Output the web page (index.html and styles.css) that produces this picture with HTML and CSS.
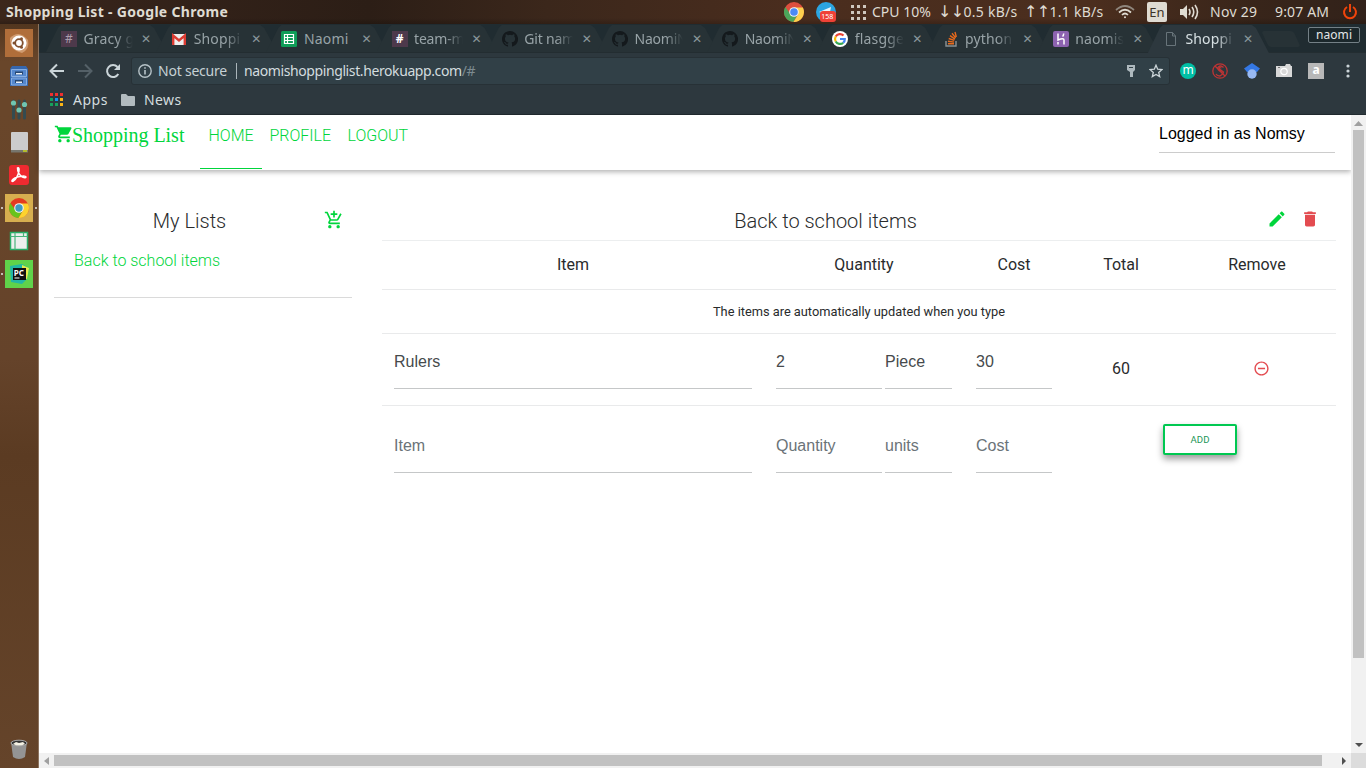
FILE: index.html
```html
<!DOCTYPE html>
<html lang="en">
<head>
<meta charset="utf-8">
<title>Shopping List</title>
<link rel="stylesheet" href="styles.css">
</head>
<body>
<svg class="defs" width="0" height="0">
  <symbol id="github" viewBox="0 0 16 16"><path fill="#14191c" d="M8 0C3.58 0 0 3.58 0 8c0 3.54 2.29 6.53 5.47 7.59.4.07.55-.17.55-.38v-1.49c-2.01.37-2.53-.49-2.69-.94-.09-.23-.48-.94-.82-1.13-.28-.15-.68-.52-.01-.53.63-.01 1.08.58 1.23.82.72 1.21 1.87.87 2.33.66.07-.52.28-.87.51-1.07-1.78-.2-3.64-.89-3.64-3.95 0-.87.31-1.59.82-2.15-.08-.2-.36-1.02.08-2.12 0 0 .67-.21 2.2.82a7.6 7.6 0 0 1 4 0c1.53-1.04 2.2-.82 2.2-.82.44 1.1.16 1.92.08 2.12.51.56.82 1.27.82 2.15 0 3.07-1.87 3.75-3.65 3.95.29.25.54.73.54 1.48v2.2c0 .21.15.46.55.38A8 8 0 0 0 8 0z"/></symbol>
  <symbol id="chrome" viewBox="0 0 20 20"><circle cx="10" cy="10" r="10" fill="#dd4f3e"/><path fill="#4ba65a" d="M1.3 5A10 10 0 0 0 9.5 20l4.3-7.7L10 10l-4.4 1z"/><path fill="#fdd04e" d="M10 5.5h8.9A10 10 0 0 1 9.5 20l4.500-7.500z"/><circle cx="10" cy="10" r="4.800" fill="#f4f4f4"/><circle cx="10" cy="10" r="3.800" fill="#4a8af4"/></symbol>
</svg>
<header class="panel">
  <strong class="window-title">Shopping List - Google Chrome</strong>
  <div class="indicators">
    <svg class="ind-chrome" width="20" height="20"><use href="#chrome"/></svg>
    <svg class="ind-telegram" width="20" height="20" viewBox="0 0 20 20"><circle cx="10" cy="10" r="10" fill="#2ca5e0"/><path d="M3 10l12-5-2 10-4-3-1 2-1-3z" fill="#e9f5fb"/><rect x="4" y="9" width="16" height="11" rx="3" fill="#ef4136"/><text x="5.2" y="17.4" class="badge-text">158</text></svg>
    <svg class="ind-grid" width="15" height="15" viewBox="0 0 15 15" fill="#cfc8bf"><path d="M0 0h3v3H0zM6 0h3v3H6zM12 0h3v3h-3zM0 6h3v3H0zM6 6h3v3H6zM12 6h3v3h-3zM0 12h3v3H0zM6 12h3v3H6zM12 12h3v3h-3z"/></svg>
    <span class="cpu">CPU 10%</span><span class="net-down"><b>↓↓</b>0.5 kB/s</span><span class="net-up"><b>↑↑</b>1.1 kB/s</span>
    <svg class="ind-wifi" width="20" height="14" viewBox="0 0 20 14" fill="none" stroke="#dfdbd2" stroke-width="1.700"><path d="M1 5Q10-3 19 5" stroke="#8f867d"/><path d="M4 7.500Q10 2 16 7.500M7 10Q10 7 13 10"/><circle cx="10" cy="12.300" r="1" fill="#dfdbd2" stroke="none"/></svg>
    <span class="lang">En</span>
    <svg class="ind-sound" width="20" height="16" viewBox="0 0 20 16" fill="none" stroke="#dfdbd2" stroke-width="1.600"><path d="M1 5h3l4-4v14l-4-4H1z" fill="#dfdbd2" stroke="none"/><path d="M10 5q2 3 0 6M13 3q3.500 5 0 10M16 1q5 7 0 14"/></svg>
    <span class="date">Nov 29</span><span class="time">9:07 AM</span>
    <svg class="ind-power" width="16" height="16" viewBox="0 0 16 16" fill="none" stroke="#f0440b" stroke-width="2"><path d="M5 3a6 6 0 1 0 6 0M8 0v8"/></svg>
  </div>
</header>
<div class="desktop">
  <nav class="dock">
    <span class="tile ubuntu"><svg width="28" height="28" viewBox="0 0 28 28"><path d="M5 9q9-9 18 2 2 9-6 13Q4 21 5 9" fill="#d09b70"/><circle cx="14" cy="14" r="7.600" fill="#fff"/><circle cx="14" cy="14" r="3.800" fill="none" stroke="#81502f" stroke-width="1.800"/><g fill="#81502f"><circle cx="9" cy="14" r="1.500"/><circle cx="16.500" cy="9.700" r="1.500"/><circle cx="16.500" cy="18.300" r="1.500"/></g></svg></span>
    <span class="tile"><svg width="28" height="28" viewBox="0 0 28 28"><path d="M7 4h14l2 3v17H5V7z" fill="#3667ae"/><path d="M6.500 7.500h15v7h-15zM6.500 16h15v7h-15z" fill="#5487cd" stroke="#86aee2"/><path d="M10 9.500h8v3h-8zM10 18h8v3h-8z" fill="#26466f"/><path d="M11 11h6v1.500h-6zM11 19.500h6V21h-6z" fill="#e8eef5"/></svg></span>
    <span class="tile"><svg width="28" height="28" viewBox="0 0 28 28"><path d="M8.500 6v17M14 6v17M19.500 6v17" stroke="#344b50" stroke-width="3" stroke-linecap="round"/><g fill="#70c5b0"><circle cx="8.500" cy="8" r="2.600"/><circle cx="14" cy="15" r="2.600"/><circle cx="19.500" cy="9.500" r="2.600"/></g></svg></span>
    <span class="tile"><svg width="28" height="28" viewBox="0 0 28 28"><rect x="6" y="4" width="17" height="20" rx="1" fill="#ccc"/><path d="M6 22h17v2.500H6z" fill="#77766e"/><path d="M18 23h4" stroke="#c8d51d" stroke-width="1.500"/></svg></span>
    <span class="tile"><svg width="28" height="28" viewBox="0 0 28 28"><rect x="4" y="4" width="20" height="20" rx="3" fill="#ef2a30"/><path d="M12.500 7q2-1 1.500 3-1.500 7-5.500 10-2 1-1.500-.5 2-3 8-4 6-1 6 .5-.5 1.500-3.500 0-5-3-5-9z" fill="none" stroke="#fff" stroke-width="1.500"/></svg></span>
    <span class="tile chrome-tile"><svg width="28" height="28" viewBox="0 0 28 28"><circle cx="14" cy="14" r="10" fill="#e33b20"/><path d="M5.300 9A10 10 0 0 0 13.500 24l4.300-7.700L14 14l-4.400 1z" fill="#67c31c"/><path d="M14 9.500h8.900A10 10 0 0 1 13.500 24l4.500-7.500z" fill="#fdd32e"/><circle cx="14" cy="14" r="4.800" fill="#f4f4f4"/><circle cx="14" cy="14" r="3.700" fill="#3f9bc0"/></svg></span>
    <span class="tile"><svg width="28" height="28" viewBox="0 0 28 28"><path d="M5.500 5.500h17v17h-17z" fill="#eceeed" stroke="#28ad67" stroke-width="1.500"/><path d="M5.500 9.500h17M10 5.500v17M18.500 5.500v4" stroke="#49b57c" stroke-width="1.200"/></svg></span>
    <span class="tile pycharm"><svg width="28" height="28" viewBox="0 0 28 28"><path d="M5 6l12-2 7 4-2 11-5 5-11-2z" fill="#22b7a4"/><path d="M17 5l7 3-2 11-5-1z" fill="#e9ed4a"/><path d="M8 8h13v12H8z" fill="#111"/><text x="8.800" y="15.600" class="pc">PC</text><path d="M9.500 18h5" stroke="#fff"/></svg></span>
    <svg class="trash" width="20" height="22" viewBox="0 0 20 22"><path d="M2 3l2 15q6 4 12 0l2-15z" fill="#949494"/><ellipse cx="10" cy="4" rx="8" ry="2.800" fill="#333" stroke="#aaa"/><path d="M4 5l3-2 3 1 4-1 2 2q-6 3-12 0" fill="#f5f2e4"/></svg>
  </nav>
  <main class="window">
    <div class="tabs">
      <div class="tab"><b class="fav slack dim">#</b><span>Gracy g</span><i>✕</i></div>
      <div class="tab"><svg class="fav" viewBox="0 0 16 16"><path d="M1.500 3h13v11h-13z" fill="#eee"/><path d="M2.200 14V4.500L8 9.500l5.800-5V14" fill="none" stroke="#dc3b32" stroke-width="2.400"/></svg><span>Shoppi</span><i>✕</i></div>
      <div class="tab"><svg class="fav" viewBox="0 0 16 16"><rect width="16" height="16" rx="1.500" fill="#0f9d58"/><path d="M3.500 3.500h9v9h-9zM3.500 6.500h9M3.500 9.500h9M6.500 3.500v9" fill="none" stroke="#fff" stroke-width="1.200"/></svg><span class="short">Naomi</span><i>✕</i></div>
      <div class="tab"><b class="fav slack">#</b><span class="tight">team-m</span><i>✕</i></div>
      <div class="tab"><svg class="fav"><use href="#github"/></svg><span class="tight">Git nam</span><i>✕</i></div>
      <div class="tab"><svg class="fav"><use href="#github"/></svg><span class="tight">NaomiN</span><i>✕</i></div>
      <div class="tab"><svg class="fav"><use href="#github"/></svg><span class="tight">NaomiN</span><i>✕</i></div>
      <div class="tab"><svg class="fav" viewBox="0 0 16 16" fill="none" stroke-width="2.200"><circle cx="8" cy="8" r="8" fill="#fff" stroke="none"/><path d="M11.500 4.500A5 5 0 0 0 3.700 5.500" stroke="#ea4335"/><path d="M3.700 5.500a5 5 0 0 0 0 5" stroke="#fbbc05"/><path d="M3.700 10.500a5 5 0 0 0 7.500 1.300" stroke="#34a853"/><path d="M11.200 11.800A5 5 0 0 0 12.800 8H8" stroke="#4285f4"/></svg><span>flasgge</span><i>✕</i></div>
      <div class="tab"><svg class="fav" viewBox="0 0 16 16" fill="none" stroke-width="1.400"><path d="M3 10v5h10v-5" stroke="#8b9295"/><path d="M5 12.700h6M5 10.300l6 .8M5.700 7.500l5.600 1.800M7 4.700l5 3.400M9 2.300l3.600 4.600M12 1l1.300 5" stroke="#e86a1c"/></svg><span>python</span><i>✕</i></div>
      <div class="tab"><svg class="fav" viewBox="0 0 16 16"><rect width="16" height="16" rx="2" fill="#8d63b0"/><path d="M5 2.500v6.500q6-2.500 6 0v4.500M10.700 2.500q0 2-1.200 3M5 11v2.500" fill="none" stroke="#fff" stroke-width="1.500"/></svg><span>naomis</span><i>✕</i></div>
      <div class="tab active"><svg class="fav" viewBox="0 0 16 16"><path d="M3.500 1.500h6l3 3.500v9.500h-9zM9.500 1.500V5h3" fill="none" stroke="#68747a"/></svg><span>Shoppi</span><i>✕</i></div>
      <div class="new-tab"></div>
      <div class="profile">naomi</div>
    </div>
    <div class="toolbar">
      <svg class="nav-icon" width="16" height="16" viewBox="0 0 16 16"><path d="M15 8H2M8 1.500L1.500 8 8 14.500" /></svg>
      <svg class="nav-icon faded" width="16" height="16" viewBox="0 0 16 16"><path d="M1 8h13M8 1.500L14.500 8 8 14.500"/></svg>
      <svg class="nav-icon" width="16" height="16" viewBox="0 0 16 16"><path d="M13.300 11A6 6 0 1 1 12.500 4"/><path d="M15 1v6H9z" class="solid"/></svg>
      <div class="omnibox">
        <svg width="14" height="14" viewBox="0 0 14 14" fill="none" stroke="#b6c2c7" stroke-width="1.400"><circle cx="7" cy="7" r="6.200"/><path d="M7 6v4.500M7 3.200v1.500" stroke-width="1.600"/></svg>
        <span class="insecure">Not secure</span><span class="divider"></span>
        <span class="url">naomishoppinglist.herokuapp.com<em>/#</em></span>
        <svg class="key" width="8" height="13" viewBox="0 0 8 13"><path d="M0 0h8v5L6 7v5H3V7L0 5z" fill="#aeb9be"/><path d="M2 2.500h4" stroke="#314047"/></svg>
        <svg class="star" width="14" height="14" viewBox="0 0 14 14"><path d="M7 1.200l1.700 4 4.300.4-3.300 2.800 1 4.200L7 10.400l-3.700 2.200 1-4.200L1 5.600l4.300-.4z" fill="none" stroke="#cbd4d8" stroke-width="1.300"/></svg>
      </div>
      <div class="extensions">
        <b class="ext-m">m</b>
        <svg width="16" height="16" viewBox="0 0 16 16" fill="none" stroke="#be3434" stroke-width="1.300"><circle cx="8" cy="8" r="7.200"/><path d="M3 3l10 10M11.500 4.500C8 1 3.500 5 7 7.500s5 3 1 5.500q-3 0-4-2M9.500 5q-3-1-2 1l4 3q0 2-2 3"/></svg>
        <svg width="16" height="16" viewBox="0 0 16 16"><path d="M8 0l8 5.500-3 3.500H3L0 5.500z" fill="#3478e5"/><circle cx="8" cy="11" r="4.700" fill="#98b9f2"/></svg>
        <svg width="16" height="16" viewBox="0 0 16 16"><path d="M0 3h9l1-2h4l1 2h1v11H0z" fill="#d8d8d8"/><circle cx="8" cy="8.500" r="3.200" fill="none" stroke="#fff" stroke-width="1.200"/><path d="M2 4.500h2" stroke="#777"/></svg>
        <b class="ext-a">a</b>
        <svg width="4" height="14" viewBox="0 0 4 14" fill="#cbd4d8"><circle cx="2" cy="2" r="1.600"/><circle cx="2" cy="7" r="1.600"/><circle cx="2" cy="12" r="1.600"/></svg>
      </div>
    </div>
    <div class="bookmarks">
      <div class="apps-grid"><b></b><b></b><b></b><b></b><b></b><b></b><b></b><b></b><b></b></div>
      <span class="apps-label">Apps</span>
      <svg width="14" height="12" viewBox="0 0 14 12"><path d="M0 1q0-1 1-1h4l2 2h6q1 0 1 1v8q0 1-1 1H1q-1 0-1-1z" fill="#b2bbbf"/></svg>
      <span class="news-label">News</span>
    </div>
    <div class="viewport">
      <div class="page">
        <nav class="site-nav">
          <a class="brand"><svg width="20" height="20" viewBox="0 0 24 24"><path d="M7 18c-1.100 0-1.990.9-1.990 2S5.900 22 7 22s2-.9 2-2-.9-2-2-2zM1 2v2h2l3.600 7.590-1.350 2.450c-.16.28-.25.61-.25.96 0 1.100.9 2 2 2h12v-2H7.420c-.14 0-.25-.11-.25-.25l.03-.12.9-1.630h7.450c.75 0 1.410-.41 1.750-1.030l3.580-6.490c.08-.14.12-.31.12-.48 0-.55-.45-1-1-1H5.210l-.94-2H1zm16 16c-1.100 0-1.990.9-1.990 2s.89 2 1.990 2 2-.9 2-2-.9-2-2-2z"/></svg><span>Shopping List</span></a>
          <a class="link current">HOME</a><a class="link">PROFILE</a><a class="link last">LOGOUT</a>
          <div class="account">Logged in as Nomsy</div>
        </nav>
        <div class="columns">
          <aside class="lists">
            <div class="lists-head"><h2>My Lists</h2><svg class="add-cart" width="20" height="20" viewBox="0 0 24 24"><path d="M11 9h2V6h3V4h-3V1h-2v3H8v2h3v3zm-4 9c-1.100 0-1.990.9-1.990 2S5.900 22 7 22s2-.9 2-2-.9-2-2-2zm10 0c-1.100 0-1.990.9-1.990 2s.89 2 1.990 2 2-.9 2-2-.9-2-2-2zm-9.830-3.250l.03-.12.9-1.630h7.450c.75 0 1.410-.41 1.750-1.030l3.860-7.010L19.420 4h-.01l-1.100 2-2.760 5H8.530l-.13-.27L6.160 6l-.95-2-.94-2H1v2h2l3.600 7.590-1.350 2.450c-.16.28-.25.61-.25.96 0 1.100.9 2 2 2h12v-2H7.420c-.13 0-.25-.11-.25-.25z"/></svg></div>
            <a class="list-link">Back to school items</a>
          </aside>
          <section class="items">
            <div class="items-head"><h2>Back to school items</h2>
              <div class="actions"><svg width="20" height="20" viewBox="0 0 24 24" fill="#00d53c"><path d="M3 17.250V21h3.750L17.810 9.940l-3.750-3.750L3 17.250zM20.710 7.040c.39-.39.39-1.020 0-1.410l-2.340-2.340c-.39-.39-1.020-.39-1.410 0l-1.830 1.830 3.750 3.750 1.830-1.830z"/></svg><svg width="20" height="20" viewBox="0 0 24 24" fill="#e34b50"><path d="M6 19c0 1.100.9 2 2 2h8c1.100 0 2-.9 2-2V7H6v12zM19 4h-3.500l-1-1h-5l-1 1H5v2h14V4z"/></svg></div>
            </div>
            <div class="row head"><span>Item</span><span>Quantity</span><span>Cost</span><span>Total</span><span>Remove</span></div>
            <div class="note">The items are automatically updated when you type</div>
            <div class="row entry"><div class="cell"><div class="field">Rulers</div></div><div class="cell pair"><div class="field">2</div><div class="field unit">Piece</div></div><div class="cell"><div class="field">30</div></div><span>60</span><span><svg class="remove" width="17" height="17" viewBox="0 0 24 24" fill="#e34b50"><path d="M7 11v2h10v-2H7zm5-9C6.480 2 2 6.480 2 12s4.480 10 10 10 10-4.480 10-10S17.520 2 12 2zm0 18c-4.410 0-8-3.590-8-8s3.590-8 8-8 8 3.590 8 8-3.590 8-8 8z"/></svg></span></div>
            <div class="row new"><div class="cell"><div class="field">Item</div></div><div class="cell pair"><div class="field">Quantity</div><div class="field unit">units</div></div><div class="cell"><div class="field">Cost</div></div><div class="add-cell"><button class="add">ADD</button></div></div>
          </section>
        </div>
      </div>
      <div class="vscroll"><svg width="9" height="5" viewBox="0 0 9 5" fill="#a0a0a0"><path d="M0 5l4.500-5L9 5z"/></svg><div class="thumb"></div><svg class="down" width="8" height="4" viewBox="0 0 8 4" fill="#505050"><path d="M0 0h8L4 4z"/></svg></div>
    </div>
    <div class="hscroll"><svg width="5" height="8" viewBox="0 0 5 8" fill="#a0a0a0"><path d="M5 0L0 4l5 4z"/></svg><div class="thumb"></div><svg class="right" width="4" height="8" viewBox="0 0 4 8" fill="#505050"><path d="M0 0v8l4-4z"/></svg><div class="corner"></div></div>
  </main>
</div>
</body>
</html>
```
FILE: styles.css
```css
* { box-sizing: border-box; }
body { margin: 0; width: 1366px; height: 768px; overflow: hidden; display: flex; flex-direction: column; font-family: "Noto Sans", sans-serif; font-size: 14px; white-space: nowrap; background: #fff; }
.defs { position: absolute; }
svg { display: block; flex: none; }

/* system panel */
.panel { height: 24px; flex: none; display: flex; align-items: center; color: #dfdbd2; background: linear-gradient(to bottom, transparent 75%, #00000033), linear-gradient(to right, #3c271b, #35231a 8%, #2c1e16 27%, #3b271b 40%, #4a2d1e 58%, #4b2e1e 80%, #38251a 92%, #32221a); }
.window-title { margin: -2px 0 0 6px; width: 778px; letter-spacing: 0.3px; }
.indicators { display: flex; align-items: center; height: 24px; }
.indicators span { margin-top: -1px; }
.ind-telegram { margin-left: 12px; }
.badge-text { font: 7px "Noto Sans", sans-serif; fill: #fff; }
.ind-grid { margin: 0 6px 0 15px; }
.cpu { width: 66px; letter-spacing: 0; }
.net-down, .net-up { display: flex; letter-spacing: 0.25px; }
.net-down b, .net-up b { width: 25.500px; font: 16px/19px "DejaVu Sans", sans-serif; letter-spacing: -0.7px; }
.net-down { width: 86px; }
.net-up { width: 91px; }
.indicators .lang { margin: 0 12px 0 12px; width: 20px; height: 20px; line-height: 20px; text-align: center; border-radius: 2px; background: #dfdbd2; color: #3c3328; font-size: 13px; }
.date { margin-left: 11px; width: 65px; letter-spacing: 0.3px; }
.time { width: 67px; letter-spacing: 0.15px; }

/* launcher */
.desktop { flex: 1; display: flex; min-height: 0; }
.dock { width: 39px; flex: none; display: flex; flex-direction: column; align-items: center; gap: 5px; padding: 5px 1px 0 0; border-right: 1px solid #8c735f; background: linear-gradient(#52361f, #69462a 5%, #69462a 12%, #65432a 45%, #5b3b22 58%, #65442a); }
.tile { position: relative; width: 28px; height: 28px; flex: none; }
.ubuntu { background: #b06e3a; }
.chrome-tile { background: #d7ae4f; }
.pycharm { background: #60d34a; }
.chrome-tile::before, .chrome-tile::after, .pycharm::before { content: ""; position: absolute; top: 13px; left: -4px; width: 2px; height: 2px; background: #c5bcb5; }
.chrome-tile::after { left: 30px; }
.pc { font: bold 8px "Noto Sans", sans-serif; fill: #fff; }
.trash { margin-top: auto; margin-bottom: 7px; }

/* browser chrome */
.window { flex: 1; min-width: 0; display: flex; flex-direction: column; background: #2d383e; }
.tabs { height: 29px; flex: none; display: flex; padding-left: 7px; background: #202c31; border-bottom: 1px solid #232d31; }
.tab { position: relative; z-index: 0; width: 110.2px; flex: none; display: flex; align-items: center; padding: 2px 0 0 15px; color: #98a3a7; }
.tab::before { content: ""; position: absolute; z-index: -1; left: 0; top: 1px; width: 121px; height: 27px; background: #273236; clip-path: polygon(0 100%, 12px 3px, 15px 0, 104px 0, 108px 3px, 121px 100%); }
.tab.active { color: #d7e0e3; z-index: 2; }
.tab.active::before { background: #2d383e; height: 28px; }
.fav { width: 16px; height: 16px; flex: none; margin-right: 6.500px; }
.slack { background: #4d394b; color: #fff; text-align: center; font-size: 12px; line-height: 16px; }
.slack.dim { color: #ac9dab; font-weight: 400; }
.tab span { width: 49px; margin-top: -1px; letter-spacing: 0.15px; overflow: hidden; -webkit-mask-image: linear-gradient(to right, #000 65%, transparent); mask-image: linear-gradient(to right, #000 65%, transparent); }
.tab .tight { letter-spacing: -0.2px; }
.tab .short { letter-spacing: 0.2px; -webkit-mask-image: none; mask-image: none; }
.tab i { font: 12px "DejaVu Sans", sans-serif; color: #8a979c; width: 10px; margin-left: 8.500px; }
.new-tab { margin: 7px 0 0 7px; width: 32px; height: 16px; background: #273236; border-radius: 3px; transform: skewX(25deg); }
.profile { margin: 3px 6px 0 auto; width: 52px; height: 16px; border: 1px solid #748086; border-radius: 2px; background: #1b272b; color: #e3e6e7; font-size: 12px; letter-spacing: 0.1px; line-height: 14px; text-align: center; }
.toolbar { height: 36px; flex: none; display: flex; align-items: center; padding-left: 10px; }
.nav-icon { margin-right: 12px; fill: none; stroke: #cbd5d9; stroke-width: 2; }
.nav-icon .solid { fill: #cbd5d9; stroke: none; }
.faded { stroke: #546067; }
.omnibox { width: 1039px; height: 28px; margin-left: -2px; flex: none; display: flex; align-items: center; padding-left: 6px; border: 1px solid #273136; border-radius: 3px; background: #314047; color: #c6d0d4; }
.insecure, .url { margin-top: -2px; }
.insecure { margin-left: 6px; width: 70px; letter-spacing: -0.22px; }
.divider { width: 1px; height: 16px; margin: 0 7px 0 8px; background: #aab5ba; }
.url { color: #d3dcdf; letter-spacing: -0.4px; }
.url em { font-style: normal; color: #7d8b91; }
.key { margin-left: auto; }
.star { margin: 0 6px 0 14px; }
.extensions { display: flex; align-items: center; gap: 16px; margin-left: 10px; }
.ext-m, .ext-a { width: 16px; height: 16px; line-height: 14px; text-align: center; color: #fff; font-size: 12px; }
.ext-m { border-radius: 50%; background: #00bfa5; font-weight: 400; }
.ext-a { background: #b8b8b8; }
.extensions svg:last-child { margin-left: 6px; }
.bookmarks { height: 26px; flex: none; display: flex; align-items: center; padding: 0 0 4px 11px; border-bottom: 1px solid #212b30; color: #d3dcdf; }
.apps-grid { display: grid; grid-template-columns: repeat(3, 3px); grid-auto-rows: 3px; gap: 2px; margin-right: 1px; }
.apps-grid b { background: #ef2f2f; }
.apps-grid b:nth-child(4), .apps-grid b:nth-child(7), .apps-grid b:nth-child(8) { background: #17a05d; }
.apps-grid b:nth-child(5) { background: #1593ef; }
.apps-grid b:nth-child(6), .apps-grid b:nth-child(9) { background: #fbb516; }
.apps-label { width: 48px; margin-left: 9px; letter-spacing: 0.5px; }
.news-label { margin-left: 9px; letter-spacing: 0.4px; }

/* shopping list page */
.viewport { height: 638px; flex: none; display: flex; background: #fff; }
.page { width: 1312px; flex: none; font-family: Roboto, sans-serif; font-size: 16px; color: #292b2c; }
.site-nav { height: 55px; display: flex; padding-left: 15px; box-shadow: 0 2px 5px #0000004d; color: #00d53c; }
.brand { display: flex; width: 146px; padding-top: 9px; fill: #00d53c; font: 20px/22px "Liberation Serif", serif; }
.brand span { margin-left: -2px; letter-spacing: -0.03px; }
.link { height: 54px; font-weight: 300; padding: 9px 8px 0; line-height: 24px; margin-left: -0.5px; }
.last { margin-left: 0.3px; }
.current { width: 62px; margin-left: 0; padding-left: 8.500px; border-bottom: 1px solid #00d53c; }
.account { width: 176px; height: 38px; margin: 0 16px 0 auto; padding-top: 7px; line-height: 24px; border-bottom: 1px solid #ccc; font-family: "Liberation Sans", sans-serif; color: #000; }
.columns { display: grid; grid-template-columns: 298px 954px; column-gap: 30px; padding: 39px 0 0 15px; }
h2 { margin: 0; font-size: 20px; font-weight: 300; line-height: 24px; text-align: center; }
.lists { height: 89px; border-bottom: 1px solid #dadada; }
.lists-head { display: flex; height: 40px; }
.lists-head h2 { width: 271px; }
.add-cart { margin: 0.500px 0 0 -1px; fill: #00d53c; }
.list-link { display: block; padding-left: 20px; line-height: 24px; font-weight: 300; color: #00d53c; }
.items-head { position: relative; height: 32px; border-bottom: 1px solid #eceeef; }
.items-head h2 { width: 887px; }
.actions { position: absolute; right: 16px; top: 0; display: flex; gap: 13px; }
.row { display: grid; grid-template-columns: 382px 200px 100px 114px 158px; text-align: center; }
.head { height: 49px; line-height: 48px; border-bottom: 1px solid #e9eaeb; }
.note { height: 44px; line-height: 43px; border-bottom: 1px solid #e9eaeb; font-size: 12.800px; text-align: center; }
.entry { height: 72px; line-height: 69px; border-bottom: 1px solid #e9eaeb; }
.cell { padding: 0 12px; text-align: left; }
.pair { display: grid; grid-template-columns: 106px 67px; gap: 3px; }
.field { height: 55px; padding-top: 16px; line-height: 24px; border-bottom: 1px solid #c5c7c8; font-family: "Liberation Sans", sans-serif; color: #464a4c; }
.new .field { height: 67px; padding-top: 28px; color: #6b7378; }
.remove { margin: 26px auto 0 74.500px; }
.add-cell { grid-column: 4 / 6; padding-top: 18px; }
.add { display: block; margin-left: 99px; width: 74px; height: 31px; padding: 0; border: 2px solid #00c851; border-radius: 2px; background: #fff; color: #1d9658; font: 9.600px Roboto, sans-serif; letter-spacing: 0.1px; box-shadow: 0 4px 7px #00000066; }
.vscroll { width: 15px; flex: none; display: flex; flex-direction: column; align-items: center; padding-top: 6px; background: #f1f1f1; }
.vscroll .thumb { width: 11px; height: 528px; margin-top: 4px; background: #c1c1c1; }
.down { margin: auto 0 6px; }
.hscroll { height: 15px; flex: none; display: flex; align-items: center; padding-left: 5px; background: #f1f1f1; }
.hscroll .thumb { width: 1268px; height: 11px; margin-left: 5px; background: #c1c1c1; }
.right { margin-left: 20px; }
.corner { width: 15px; height: 15px; margin-left: auto; background: #dcdcdc; }
```
